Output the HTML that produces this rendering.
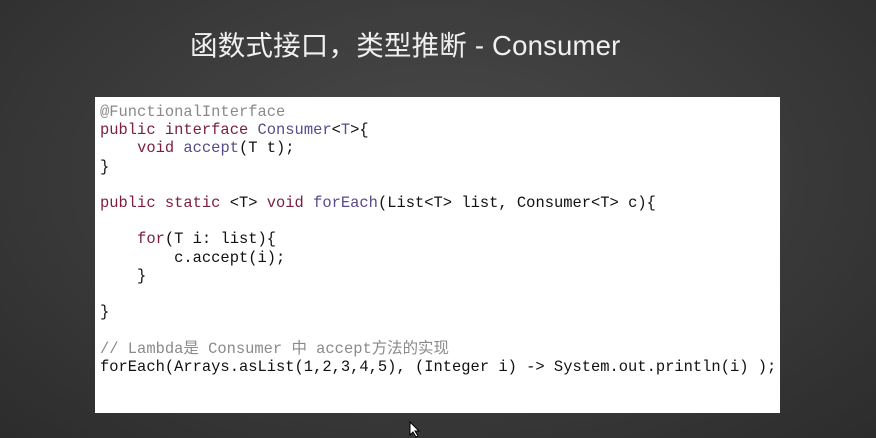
<!DOCTYPE html>
<html><head><meta charset="utf-8"><style>
html,body{margin:0;padding:0}
body{width:876px;height:438px;overflow:hidden;background:radial-gradient(ellipse at 50% 40%,#4a4a4a 0%,#3a3a3a 55%,#2c2c2c 100%);position:relative;font-family:"Liberation Sans","Noto Sans CJK SC",sans-serif}
.t{position:absolute;left:190px;top:23px;font-size:27.5px;color:#f0f0f0;white-space:nowrap;letter-spacing:0.2px}
.box{position:absolute;left:95px;top:97px;width:685px;height:316px;background:#fff}
pre{position:absolute;left:100px;top:103px;margin:0;font-family:"Liberation Mono","Noto Sans CJK SC",monospace;font-size:15.45px;line-height:18.2px;color:#111}
.k{color:#7a1f3d}.f{color:#5a4a8a}.c{color:#8a8a8a}
</style></head><body>
<div class="t">函数式接口，类型推断 - Consumer</div>
<div class="box"></div>
<pre><span class="c">@FunctionalInterface</span>
<span class="k">public interface</span> <span class="f">Consumer</span>&lt;<span class="f">T</span>&gt;{
    <span class="k">void</span> <span class="f">accept</span>(T t);
}

<span class="k">public static</span> &lt;T&gt; <span class="k">void</span> <span class="f">forEach</span>(List&lt;T&gt; list, Consumer&lt;T&gt; c){

    <span class="k">for</span>(T i: list){
        c.accept(i);
    }

}

<span class="c">// Lambda是 Consumer 中 accept方法的实现</span>
forEach(Arrays.asList(1,2,3,4,5), (Integer i) -&gt; System.out.println(i) );</pre>
<svg style="position:absolute;left:409px;top:421px" width="12" height="17"><path d="M1 1 L1 14 L4 11 L7 16 L9 15 L6 10 L10 10 Z" fill="#fff" stroke="#000" stroke-width="1"/></svg>
</body></html>
